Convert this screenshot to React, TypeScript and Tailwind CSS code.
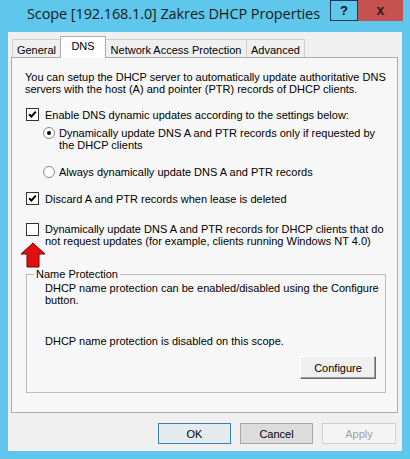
import React from 'react';

const ui = "font-['Liberation_Sans',Arial,sans-serif] text-[11px] leading-[12px] text-black whitespace-nowrap";

function Check({ checked }: { checked?: boolean }) {
  return (
    <span className="w-[13px] h-[13px] shrink-0 border border-[#333] bg-white flex items-center justify-center">
      {checked && (
        <svg width="9" height="9" viewBox="0 0 9 9">
          <path d="M1.2 4.2 L3.4 6.6 L7.8 1.6" stroke="#000" strokeWidth="2" fill="none" />
        </svg>
      )}
    </span>
  );
}

function Radio({ checked }: { checked?: boolean }) {
  return (
    <span className="w-[12px] h-[12px] shrink-0 rounded-full border border-[#8a8a8a] bg-white flex items-center justify-center">
      {checked && <span className="w-[4px] h-[4px] rounded-full bg-black" />}
    </span>
  );
}

function Tab({ label, active, w }: { label: string; active?: boolean; w: string }) {
  if (active) {
    return (
      <div
        className={`${w} h-[22px] -mb-px relative z-10 -ml-px bg-white border border-b-0 border-[#adadad] flex justify-center pt-[3px]`}
      >
        {label}
      </div>
    );
  }
  return (
    <div
      className={`${w} h-[18px] -ml-px bg-[#f0f0f0] border border-b-0 border-[#d0d0d0] flex justify-center pt-[4px]`}
    >
      {label}
    </div>
  );
}

export default function App() {
  return (
    <div className="w-[410px] h-[459px] bg-[#5fc7ec] flex flex-col overflow-hidden">
      {/* Title bar */}
      <div className="h-[32px] flex">
        <div className="flex-1 min-w-0 pl-[27px] pt-[4px] whitespace-nowrap font-['Open_Sans',sans-serif] text-[14.5px] leading-[20px] text-[#1a1a1a] tracking-[-0.1px]">
          Scope [192.168.1.0] Zakres DHCP Properties
        </div>
        <div className="flex h-[21px] mr-[7px]">
          <div className="w-[28px] border border-[#1f3a50] flex items-center justify-center font-['Liberation_Sans',sans-serif] font-bold text-[13px] text-[#111]">
            ?
          </div>
          <div className="w-[45px] bg-[#c75050] flex items-center justify-center font-['Liberation_Sans',sans-serif] font-bold text-[14px] text-[#222]">
            x
          </div>
        </div>
      </div>

      {/* Client area */}
      <div className={`mx-[8px] h-[419px] bg-[#f0f0f0] flex flex-col ${ui}`}>
        {/* Tabs */}
        <div className="flex items-end h-[25px] pl-[5px] pt-[4px]">
          <Tab label="General" w="w-[49px]" />
          <Tab label="DNS" w="w-[46px]" active />
          <Tab label="Network Access Protection" w="w-[142px]" />
          <Tab label="Advanced" w="w-[59px]" />
        </div>

        {/* Panel */}
        <div className="ml-[3px] w-[387px] h-[356px] border border-[#adadad] bg-[#f7f7f7] relative pl-[14px] pt-[13px]">
          <p className="-ml-px">
            You can setup the DHCP server to automatically update authoritative DNS
            <br />
            servers with the host (A) and pointer (PTR) records of DHCP clients.
          </p>

          <div className="flex gap-[6px] mt-[13px] items-center">
            <Check checked />
            <span>Enable DNS dynamic updates according to the settings below:</span>
          </div>

          <div className="flex gap-[4px] mt-[6px] ml-[17px]">
            <Radio checked />
            <span>
              Dynamically update DNS A and PTR records only if requested by
              <br />
              the DHCP clients
            </span>
          </div>

          <div className="flex gap-[4px] mt-[15px] ml-[17px]">
            <Radio />
            <span>Always dynamically update DNS A and PTR records</span>
          </div>

          <div className="flex gap-[6px] mt-[14px] items-center">
            <Check checked />
            <span>Discard A and PTR records when lease is deleted</span>
          </div>

          <div className="flex gap-[6px] mt-[18px]">
            <Check />
            <span>
              Dynamically update DNS A and PTR records for DHCP clients that do
              <br />
              not request updates (for example, clients running Windows NT 4.0)
            </span>
          </div>

          {/* Red arrow annotation */}
          <svg className="absolute left-[8px] top-[184px]" width="26" height="26" viewBox="0 0 26 26">
            <path d="M13 1 L25 12 L19 12 L19 25 L7 25 L7 12 L1 12 Z" fill="#e01010" stroke="#7a0000" strokeWidth="1" />
          </svg>

          {/* Group box */}
          <div className="relative mt-[27px] w-[360px] border border-[#bcbcbc] pl-[18px] pr-[9px] pt-[7px] pb-[13px]">
            <span className="absolute -top-[7px] left-[7px] bg-[#f7f7f7] px-[2px]">Name Protection</span>
            <p>
              DHCP name protection can be enabled/disabled using the Configure
              <br />
              button.
            </p>
            <p className="mt-[29px]">DHCP name protection is disabled on this scope.</p>
            <div className="flex justify-end mt-[9px]">
              <button className="w-[76px] h-[23px] bg-[#f0f0f0] border border-t-white border-l-white border-r-[#6a6a6a] border-b-[#6a6a6a] shadow-[inset_-1px_-1px_0_#a0a0a0]">
                Configure
              </button>
            </div>
          </div>
        </div>

        {/* Buttons */}
        <div className="flex justify-end gap-[9px] mt-[10px] mr-[6px]">
          <button className="w-[73px] h-[21px] bg-[#e5eaef] border border-[#3c7fb1]">OK</button>
          <button className="w-[73px] h-[21px] bg-[#dcdcdc] border border-[#a8a8a8]">Cancel</button>
          <button className="w-[74px] h-[21px] bg-[#f4f4f4] border border-[#cfcfcf] text-[#a0a0a0]">Apply</button>
        </div>
      </div>
    </div>
  );
}
